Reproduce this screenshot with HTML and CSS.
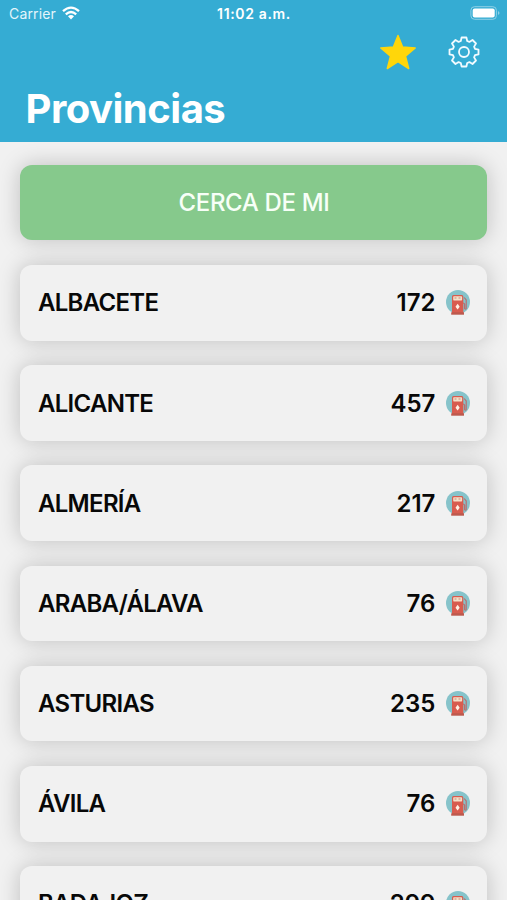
FILE: index.html
```
<!DOCTYPE html>
<html lang="es">
<head>
<meta charset="utf-8">
<title>Provincias</title>
<link rel="stylesheet" href="styles.css">
</head>
<body>
<svg class="defs" width="0" height="0" aria-hidden="true">
  <symbol id="pump" viewBox="0 0 24 25">
    <circle cx="12" cy="12" r="12" fill="#86c3ca"/>
    <path d="M18.200 7.500l2 2.500v8.500q-.7 1.500-1.600 0v-4.300q0-1.200-1.800-1.200" fill="none" stroke="#b66f70" stroke-width="1.200"/>
    <path d="M6 6.500q0-1.500 1.500-1.500h8.300q1.500 0 1.500 1.500v16.500h-11.300z" fill="#d85c4f"/>
    <rect x="5.200" y="22.300" width="12.800" height="2.400" fill="#bd594d"/>
    <rect x="7.200" y="6.300" width="8.900" height="4.200" rx=".7" fill="#f5dfc8"/>
    <path d="M8.500 8h2m2 0h2" stroke="#c58d78" stroke-width="1"/>
    <path d="M11.600 13.800l2.100 3-2.100 2.600-2.100-2.600z" fill="#fff0e4"/>
  </symbol>
</svg>
<header class="header">
  <div class="status">
    <div class="carrier"><span>Carrier</span>
      <svg width="18" height="14" viewBox="0 0 18 14" fill="none" stroke="#fff" stroke-width="2.300"><path d="M1 5.200q8-7.200 16 0M3.800 8.300q5.200-4.600 10.400 0"/><path d="M6 10.300q3-2.400 6 0l-3 3.200z" fill="#fff" stroke="none"/></svg>
    </div>
    <div class="time">11:02 a.m.</div>
    <svg class="battery" width="31" height="15" viewBox="0 0 31 15"><rect x=".9" y=".7" width="25.500" height="12.600" rx="3.600" fill="none" stroke="#8fd0e6" stroke-width="1"/><rect x="2.700" y="2.500" width="22" height="9" rx="2" fill="#fff"/><path d="M28 5q3 2 0 4z" fill="#8fd0e6"/></svg>
  </div>
  <div class="actions">
    <svg width="38" height="36" viewBox="0 0 38 36"><path d="M19 1.500l4.600 11.600 12.600.9-9.700 8.200 3.200 12.300L19 27.600 8.300 34.500l3.200-12.300L1.800 14l12.600-.9z" fill="#ffd60a" stroke="#ffd60a" stroke-width="1.500" stroke-linejoin="round"/></svg>
    <svg width="32" height="32" viewBox="0 0 32 32" fill="none" stroke="#f2fbff" stroke-width="1.800" stroke-linejoin="round"><circle cx="16" cy="16" r="5"/><path d="M13.600 1.500h4.800l.8 3.500 2.200.9 3.100-1.900 3.500 3.500-1.900 3.100.9 2.200 3.500.8v4.800l-3.500.8-.9 2.200 1.900 3.100-3.500 3.500-3.100-1.900-2.200.9-.8 3.500h-4.800l-.8-3.500-2.200-.9L7.500 28 4 24.500l1.900-3.100-.9-2.200-3.500-.8v-4.800l3.500-.8.9-2.200L4 7.500 7.500 4l3.100 1.900 2.200-.9z"/></svg>
  </div>
  <h1>Provincias</h1>
</header>
<main class="list">
  <div class="card near">CERCA DE MI</div>
  <div class="card"><span class="name">ALBACETE</span><span class="count">172</span><svg class="pump"><use href="#pump"/></svg></div>
  <div class="card"><span class="name">ALICANTE</span><span class="count">457</span><svg class="pump"><use href="#pump"/></svg></div>
  <div class="card"><span class="name">ALMERÍA</span><span class="count">217</span><svg class="pump"><use href="#pump"/></svg></div>
  <div class="card"><span class="name">ARABA/ÁLAVA</span><span class="count">76</span><svg class="pump"><use href="#pump"/></svg></div>
  <div class="card"><span class="name">ASTURIAS</span><span class="count">235</span><svg class="pump"><use href="#pump"/></svg></div>
  <div class="card"><span class="name">ÁVILA</span><span class="count">76</span><svg class="pump"><use href="#pump"/></svg></div>
  <div class="card"><span class="name">BADAJOZ</span><span class="count">299</span><svg class="pump"><use href="#pump"/></svg></div>
</main>
</body>
</html>
```
FILE: styles.css
```
* { box-sizing: border-box; }
html, body { height: 900px; overflow: hidden; }
body {
  margin: 0;
  background: #f1f1f1;
  color: #080808;
  font-family: Inter, "Liberation Sans", sans-serif;
}
.defs { position: absolute; }
.header {
  height: 142.400px;
  background: #35acd3;
  color: #fff;
}
.status {
  display: grid;
  grid-template-columns: 1fr auto 1fr;
  align-items: center;
  height: 27px;
  padding: 0 6px 0 9px;
  font-size: 14px;
}
.carrier { display: flex; align-items: center; gap: 6px; letter-spacing: .15px; color: #e4f5fb; }
.carrier svg { margin-top: -1px; }
.time { font-weight: 600; font-size: 14px; letter-spacing: .65px; margin-right: 2px; }
.battery { justify-self: end; }
.actions {
  display: flex;
  justify-content: flex-end;
  align-items: center;
  gap: 31px;
  height: 50px;
  padding-right: 27px;
}
h1 {
  margin: 7px 0 0 25.500px;
  font-size: 40px;
  line-height: 50px;
  font-weight: 700;
  letter-spacing: -.5px;
}
.list {
  display: flex;
  flex-direction: column;
  gap: 24.700px;
  padding: 22.500px 19.600px 0 20.400px;
}
.card {
  display: flex;
  align-items: center;
  flex: none;
  height: 75.500px;
  padding: 0 17.400px 0 17.600px;
  border-radius: 12px;
  background: #f1f1f1;
  box-shadow: 0 0 22px rgba(0, 0, 0, .21);
  font-size: 24px;
  font-weight: 500;
}
.near {
  justify-content: center;
  background: #86c98c;
  color: #f7fff7;
  letter-spacing: -.35px;
}
.name { flex: 1; font-weight: 600; letter-spacing: -.7px; }
.count { font-weight: 600; }
.pump { width: 24px; height: 25px; margin-left: 10.600px; }
```
